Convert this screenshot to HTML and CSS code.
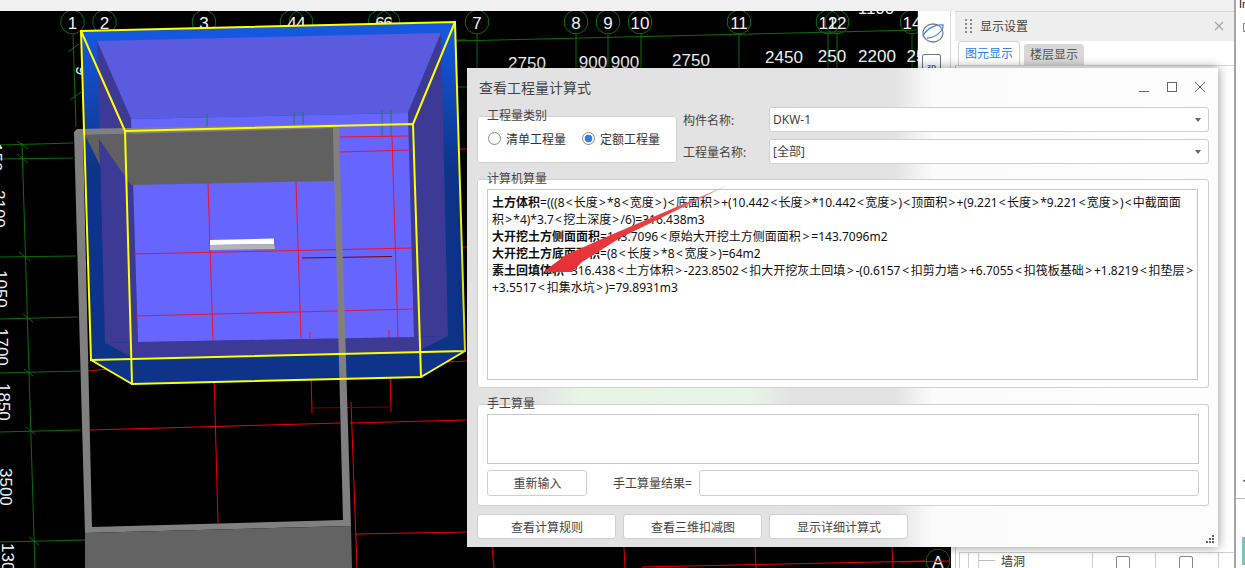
FILE: index.html
```html
<!DOCTYPE html>
<html lang="zh">
<head>
<meta charset="utf-8">
<title>查看工程量计算式</title>
<link rel="stylesheet" href="styles.css">
</head>
<body>
<div class="app">
  <div class="main-col">
    <div class="topbar"></div>
    <div class="work">
      <div class="canvas">
        <svg class="cad" viewBox="0 11 951 557" width="951" height="557">
          <defs>
            <polygon id="oct" points="11.6,3.1 8.5,8.5 3.1,11.6 -3.1,11.6 -8.5,8.5 -11.6,3.1 -11.6,-3.1 -8.5,-8.5 -3.1,-11.6 3.1,-11.6 8.5,-8.5 11.6,-3.1"/>
            <linearGradient id="pitfill" gradientUnits="userSpaceOnUse" x1="0" y1="30" x2="0" y2="170">
              <stop offset="0" stop-color="#1558e0"/>
              <stop offset="1" stop-color="#0d3489"/>
            </linearGradient>
          </defs>
          <!-- axes -->
          <g class="grn">
            <path d="M456 41L918 30M477 34V68M576 34V68M608 34V68M641 34V68M739 34V68M828 34V68M837 34V68M912 34V68M918 12V68"/>
            <path d="M73 34L76 127M68 52L79 44M70 100L81 92M0 145L73 143M0 159L73 158M0 257L76 256M0 319L78 317M0 373L80 371M0 432L81 430M0 542L85 540M22 143L35 568"/>
            <path d="M17 141L28 149M17 154L28 163M19 252L30 261M23 314L33 322M24 369L33 376M26 427L35 434M29 537L39 545"/>
            <path d="M457 40H467M458 87H467"/>
            <use href="#oct" x="72.5" y="22"/><use href="#oct" x="104.5" y="22"/><use href="#oct" x="204" y="22"/>
            <use href="#oct" x="292" y="22"/><use href="#oct" x="301" y="22"/><use href="#oct" x="380" y="22"/><use href="#oct" x="388" y="22"/>
            <use href="#oct" x="477" y="22"/><use href="#oct" x="576" y="22"/><use href="#oct" x="608" y="22"/><use href="#oct" x="640" y="22"/>
            <use href="#oct" x="739" y="22"/><use href="#oct" x="828" y="22"/><use href="#oct" x="837" y="22"/><use href="#oct" x="912" y="22"/>
            <use href="#oct" x="938" y="561"/>
          </g>
          <g class="lbl mid">
            <text x="72.5" y="29">1</text><text x="104.5" y="29">2</text><text x="204" y="29">3</text>
            <text x="292" y="29">4</text><text x="301" y="29">4</text><text x="380" y="29">6</text><text x="388" y="29">6</text>
            <text x="477" y="29">7</text><text x="576" y="29">8</text><text x="608" y="29">9</text><text x="640" y="29">10</text>
            <text x="739" y="29">11</text><text x="828" y="29">12</text><text x="837" y="29">12</text><text x="912" y="29">14</text>
            <text x="938" y="568">A</text>
            <text x="876" y="14">1100</text>
            <text x="527" y="69">2750</text><text x="593" y="68">900</text><text x="625" y="68">900</text>
            <text x="691" y="66">2750</text><text x="784" y="63">2450</text><text x="832" y="62">250</text><text x="877" y="62">2200</text><text x="916" y="62">25</text>
          </g>
          <g class="lbl">
            <text transform="rotate(90 76 66)" x="76" y="66">9</text>
            <text transform="rotate(90 -10 143)" x="-10" y="143">150</text>
            <text transform="rotate(90 -7 190)" x="-7" y="190">2100</text>
            <text transform="rotate(90 -5 270)" x="-5" y="270">1050</text>
            <text transform="rotate(90 -4 328)" x="-4" y="328">1700</text>
            <text transform="rotate(90 -2 383)" x="-2" y="383">1850</text>
            <text transform="rotate(90 0 468)" x="0" y="468">3500</text>
            <text transform="rotate(90 2 543)" x="2" y="543">130</text>
          </g>
          <!-- reds outside the pit -->
          <g class="red">
            <path d="M214 374L218 523M90 430L340 423M350 423L467 420M88 371L107 369M447 362L467 361M311 372L312 413M390 370L391 412M351 402L357 568M355 534L467 532M460 149H467M463 247H467"/>
            <path class="dk" d="M312 408L391 407"/>
            <path d="M492 547L494 568M624 547L625 568M755 547L756 568M892 547L893 568M642 567L925 561M900 562L950 561"/>
          </g>
          <!-- pit -->
          <polygon class="pit" points="81,31 455,22 465,351 421,377 132,384 91,360"/>
          <polygon class="pit-top" points="81,31 455,22 441,33 97,41"/>
          <polygon class="pit-back" points="97,41 441,33 408,113 131,119"/>
          <polygon class="pit-wall" points="97,41 131,119 138,342 105,343"/>
          <polygon class="pit-wall" points="441,33 408,113 414,337 448,336"/>
          <polygon class="pit-wall" points="105,343 138,342 414,337 448,336 418,351 133,358"/>
          <polygon class="pit-floor" points="131,119 408,113 414,337 138,342"/>
          <g class="red thin">
            <path d="M208 183L213 341M296 182L301 338M392 137L398 337M133 254L413 248M136 316L414 309M340 137L409 136M340 152L411 150M310 332V338M389 330V337"/>
            <path class="dk" d="M302 258L392 256.5"/>
          </g>
          <path class="grn2" d="M207 114V126M294 112V125M303 112V125M382 110V136M391 110V136"/>
          <polygon class="bar-w" points="210,240 274,238.5 274,244 210,245"/>
          <polygon class="bar-g" points="210,245 274,244 275,249 210,250"/>
          <!-- concrete frame -->
          <polygon class="slab" points="85,135 333,128 334,181 131,185 99,139 100,165"/>
          <polygon class="fr" points="74,132 77,129 335,124 339,128 351,526 343,520 333,128 83,135 92,527 343,520 351,526 85,533"/>
          <polygon class="fr-dk" points="85,533 351,526 352,568 85,568"/>
          <!-- yellow wire box -->
          <g class="ylw">
            <polygon points="81,31 455,22 465,351 91,360"/>
            <polygon points="125,131 413,124 421,377 132,384"/>
            <path d="M81 31L125 131M455 22L413 124M91 360L132 384M465 351L421 377"/>
          </g>
        </svg>
        <div class="strip">
          <svg width="24" height="22" viewBox="0 0 24 22" class="orbit">
            <ellipse cx="12" cy="11" rx="10" ry="9" class="orb-g"/>
            <path d="M2 14C6 6 15 2 22 3C23 8 15 16 6 16" class="orb-b"/>
          </svg>
          <div class="btn3d">3D</div>
        </div>
      </div>
      <div class="panel">
        <div class="p-head">
          <span class="grip"><i></i><i></i><i></i><i></i><i></i><i></i><i></i><i></i></span>
          <span class="p-title">显示设置</span>
          <svg class="p-close" width="10" height="10" viewBox="0 0 10 10"><path d="M1 1L9 9M9 1L1 9"/></svg>
        </div>
        <div class="p-tabs">
          <span class="tab on">图元显示</span>
          <span class="tab">楼层显示</span>
        </div>
        <div class="p-body">
          <div class="p-row">
            <span class="c1"></span><span class="c2"></span><span class="c3"><i class="dash"></i>墙洞</span>
            <span class="c4"><i class="box"></i></span><span class="c4"><i class="box"></i></span>
          </div>
        </div>
      </div>
    </div>
  </div>
  <div class="side">
    <span class="side-t">Ir</span>
    <i class="side-box"></i>
    <span class="side-arrow">◄</span>
    <i class="side-line"></i>
    <i class="side-teal"></i>
  </div>
</div>

<section class="dialog">
  <header class="d-title">
    <h1>查看工程量计算式</h1>
    <span class="wbtns">
      <svg width="12" height="12" viewBox="0 0 12 12"><path d="M1 10.5H11"/></svg>
      <svg width="12" height="12" viewBox="0 0 12 12"><rect x="1.5" y="1.5" width="9" height="9"/></svg>
      <svg width="12" height="12" viewBox="0 0 12 12"><path d="M1 1L11 11M11 1L1 11"/></svg>
    </span>
  </header>
  <div class="d-top">
    <fieldset class="grp g-type">
      <span class="legend">工程量类别</span>
      <label class="radio"><i></i>清单工程量</label>
      <label class="radio on"><i></i>定额工程量</label>
    </fieldset>
    <div class="d-fields">
      <div class="fld"><span class="f-name">构件名称:</span><div class="sel">DKW-1<b></b></div></div>
      <div class="fld"><span class="f-name">工程量名称:</span><div class="sel">[全部]<b></b></div></div>
    </div>
  </div>
  <fieldset class="grp g-calc">
    <span class="legend">计算机算量</span>
    <div class="area">
      <p class="l1"><b>土方体积</b>=(((8<u>&lt;</u>长度<u>&gt;</u>*8<u>&lt;</u>宽度<u>&gt;</u>)<u>&lt;</u>底面积<u>&gt;</u>+(10.442<u>&lt;</u>长度<u>&gt;</u>*10.442<u>&lt;</u>宽度<u>&gt;</u>)<u>&lt;</u>顶面积<u>&gt;</u>+(9.221<u>&lt;</u>长度<u>&gt;</u>*9.221<u>&lt;</u>宽度<u>&gt;</u>)<u>&lt;</u>中截面面<br>积<u>&gt;</u>*4)*3.7<u>&lt;</u>挖土深度<u>&gt;</u>/6)=316.438m3</p>
      <p class="l2"><b>大开挖土方侧面面积</b>=143.7096<u>&lt;</u>原始大开挖土方侧面面积<u>&gt;</u>=143.7096m2</p>
      <p class="l3"><b>大开挖土方底面面积</b>=(8<u>&lt;</u>长度<u>&gt;</u>*8<u>&lt;</u>宽度<u>&gt;</u>)=64m2</p>
      <p class="l4"><b>素土回填体积</b>=316.438<u>&lt;</u>土方体积<u>&gt;</u>-223.8502<u>&lt;</u>扣大开挖灰土回填<u>&gt;</u>-(0.6157<u>&lt;</u>扣剪力墙<u>&gt;</u>+6.7055<u>&lt;</u>扣筏板基础<u>&gt;</u>+1.8219<u>&lt;</u>扣垫层<u>&gt;</u><br>+3.5517<u>&lt;</u>扣集水坑<u>&gt;</u>)=79.8931m3</p>
    </div>
  </fieldset>
  <fieldset class="grp g-hand">
    <span class="legend">手工算量</span>
    <div class="area-s"></div>
    <div class="hand-row">
      <button class="btn b-re" type="button">重新输入</button>
      <span class="h-lab">手工算量结果=</span>
      <div class="inp"></div>
    </div>
  </fieldset>
  <div class="d-btns">
    <button class="btn b-wide" type="button">查看计算规则</button>
    <button class="btn b-wide" type="button">查看三维扣减图</button>
    <button class="btn b-wide" type="button">显示详细计算式</button>
  </div>
  <svg class="resize" width="9" height="9" viewBox="0 0 9 9"><path d="M6 0h2v2H6zM3 3h2v2H3zM6 3h2v2H6zM0 6h2v2H0zM3 6h2v2H3zM6 6h2v2H6z"/></svg>
  <svg class="arrow" width="200" height="100" viewBox="0 0 200 100">
    <defs>
      <linearGradient id="arr" x1="1" y1="0" x2="0" y2="1">
        <stop offset="0" stop-color="#f6b0b2"/>
        <stop offset=".3" stop-color="#ec4046"/>
        <stop offset="1" stop-color="#e62f36"/>
      </linearGradient>
    </defs>
    <polygon fill="url(#arr)" points="188,1 66,53 26,71 3,88 32,88 42,78 80,54"/>
  </svg>
</section>
</body>
</html>
```
FILE: styles.css
```css
* { box-sizing: border-box; }
html, body { margin: 0; padding: 0; }
body {
  width: 1245px; height: 568px; overflow: hidden; position: relative; background: #fff;
  font-family: "Noto Sans", "Noto Sans CJK SC", sans-serif; font-size: 12px; color: #333;
}
.app { display: flex; width: 1245px; height: 568px; }
.main-col { width: 1236px; display: flex; flex-direction: column; border-right: 2px solid #a6a6a6; flex: none; }
.topbar { height: 11px; background: #f0f0f0; flex: none; }
.work { display: flex; flex: 1; min-height: 0; }
.canvas { width: 951px; height: 557px; position: relative; background: #000; flex: none; overflow: hidden; }
.cad { display: block; }
.grn path, .grn use { fill: none; stroke: #0a6e0a; stroke-width: 1; }
.grn2 { fill: none; stroke: #0f8a1f; stroke-width: 1; }
.lbl text { fill: #f2f2f2; font-family: "Liberation Sans", sans-serif; font-size: 17px; }
.mid text { text-anchor: middle; }
.red path { fill: none; stroke: #f00000; stroke-width: 1; }
.red path.dk { stroke: #7a0000; }
.thin path { stroke: #f01030; }
.pit { fill: url(#pitfill); }
.pit-top { fill: #1558e0; }
.pit-back { fill: #5b5be0; }
.pit-wall { fill: #3c3a94; }
.pit-floor { fill: #6666ff; }
.bar-w { fill: #fff; }
.bar-g { fill: #b4b4b4; }
.slab { fill: #606060; }
.fr { fill: #808080; fill-rule: evenodd; }
.fr-dk { fill: #636363; }
.ylw polygon, .ylw path { fill: none; stroke: #ffff00; stroke-width: 2; }
.strip {
  position: absolute; top: 0; right: 0; width: 33px; height: 70px; background: #fff;
  border-right: 1px solid #d8d8d8; padding: 11px 0 0 3px;
}
.orbit { display: block; }
.orb-g { fill: none; stroke: #7a8088; stroke-width: 1.3; }
.orb-b { fill: none; stroke: #3d8be8; stroke-width: 1.3; }
.btn3d {
  width: 19px; height: 20px; margin: 10px 0 0 1px; border: 1px solid #6e7480; border-radius: 2px;
  color: #2e6fd0; font-size: 7px; font-weight: 700; text-align: center; line-height: 26px;
}
.panel { flex: 1; display: flex; flex-direction: column; padding-left: 4px; min-width: 0; }
.p-head {
  height: 30px; background: #eeeeef; border-top: 1px solid #d4d4d4; display: flex; align-items: center;
  padding: 0 0 2px 10px; flex: none;
}
.grip { display: grid; grid-template-columns: 2px 2px; gap: 2px 3px; width: 7px; }
.grip i { width: 2px; height: 2px; background: #8a8a8a; }
.p-title { margin-left: 8px; font-size: 12px; color: #444; }
.p-close { margin-left: auto; margin-right: 10px; }
.p-close path { stroke: #a4a4a4; stroke-width: 1.2; fill: none; }
.p-tabs { height: 25px; display: flex; gap: 4px; padding: 2px 0 0 3px; align-items: flex-end; flex: none; border-bottom: 1px solid #d4d4d4; }
.tab {
  width: 60px; height: 21px; background: #d8d8d8; border-radius: 3px 3px 0 0; text-align: center;
  line-height: 22px; font-size: 12px; color: #555;
}
.tab.on {
  width: 62px; height: 24px; background: #fff; border: 1px solid #d4d4d4; border-bottom: 0;
  color: #2e80e8; line-height: 24px;
}
.p-body { flex: 1; display: flex; flex-direction: column; justify-content: flex-end; border-left: 1px solid #cfcfcf; }
.p-row { height: 16px; display: flex; border-top: 1px solid #cfcfcf; margin-left: 3px; }
.c1 { width: 9px; border-left: 1px solid #cfcfcf; }
.c2 { width: 10px; border-left: 1px solid #cfcfcf; }
.c3 { width: 115px; border-left: 1px solid #cfcfcf; border-right: 1px solid #cfcfcf; display: flex; align-items: center; font-size: 12px; color: #333; }
.dash { width: 16px; height: 1px; background: #bdbdbd; margin-right: 6px; flex: none; }
.c4 { width: 63px; border-right: 1px solid #cfcfcf; padding: 3px 0 0 23px; }
.box { display: block; width: 14px; height: 20px; border: 1px solid #888; border-radius: 2px; }
.side { width: 9px; display: flex; flex-direction: column; overflow: hidden; background: #fff; flex: none; }
.side-t { font-size: 11px; line-height: 8px; height: 8px; color: #111; font-family: "Liberation Sans", sans-serif; padding-left: 3px; white-space: nowrap; overflow: hidden; }
.side-box { display: block; width: 9px; height: 9px; margin: 15px 0 0 7px; border: 1px solid #888; flex: none; }
.side-arrow { display: block; margin-top: 443px; padding-left: 5px; font-size: 8px; line-height: 10px; height: 10px; color: #555; flex: none; overflow: hidden; }
.side-line { display: block; height: 1px; background: #bbb; margin-top: 13px; flex: none; }
.side-teal { display: block; height: 28px; margin: 38px 0 0 6px; background: #7cc4be; flex: none; }

.dialog {
  position: absolute; left: 467px; top: 68px; width: 751px; height: 479px;
  background-color: #e2e2e2;
  background-image:
    linear-gradient(90deg, transparent 9%, #e6f5e6 15%, #e8f4e8 38%, transparent 43%),
    linear-gradient(90deg, #e2e2e2 0, #e3e3e3 57%, #fbfbfb 62%, #fdfdfd 100%);
  background-size: 100% 25px, 100% 100%;
  background-position: 0 319px, 0 0;
  background-repeat: no-repeat;
  box-shadow: 0 0 10px rgba(0,0,0,.45); padding: 0 9px 0 10px; display: flex; flex-direction: column;
}
.d-title { height: 39px; display: flex; align-items: center; flex: none; }
.d-title h1 { margin: -1px 0 0 2px; font-size: 14px; font-weight: 400; color: #444; }
.wbtns { margin-left: auto; display: flex; gap: 16px; margin-right: 3px; margin-top: -2px; }
.wbtns path, .wbtns rect { fill: none; stroke: #666; stroke-width: 1; }
.d-top { display: flex; flex: none; height: 72px; }
.grp { position: relative; margin: 0; padding: 0; border: 1px solid #cfcfcf; border-radius: 3px; background: #fff; }
.legend { position: absolute; left: 9px; top: -9px; line-height: 16px; color: #444; }
.g-type { width: 200px; height: 47px; margin-top: 9px; display: flex; align-items: center; padding: 0 0 2px 10px; gap: 16px; flex: none; }
.radio { display: flex; align-items: center; gap: 5px; color: #333; }
.radio i { width: 13px; height: 13px; border: 1px solid #8a8a8a; border-radius: 50%; background: #fff; display: block; }
.radio.on i { border-color: #8a8a8a; background: radial-gradient(circle, #2e80e8 0, #2e80e8 3.5px, #fff 4.2px); }
.d-fields { flex: 1; display: flex; flex-direction: column; gap: 7px; padding-left: 6px; }
.fld { display: flex; align-items: center; height: 25px; }
.f-name { width: 86px; color: #444; flex: none; }
.sel {
  flex: 1; height: 25px; border: 1px solid #cfcfcf; border-radius: 3px; background: #fff;
  padding-left: 3px; line-height: 23px; color: #444; position: relative; font-size: 12px;
}
.sel b { position: absolute; right: 7px; top: 10px; border: 3px solid transparent; border-top: 4px solid #666; border-bottom: 0; }
.g-calc { height: 209px; padding: 9px 10px 0 9px; flex: none; }
.area { height: 191px; border: 1px solid #c8c8c8; background: #fff; padding: 4px 0 0 4px; color: #111; line-height: 17px; white-space: nowrap; }
.area p { margin: 0; }
.area b { font-weight: 700; }
.area u { text-decoration: none; padding: 0 1.5px; }
.area .l1 u { padding: 0 1.2px; }
.area .l2 u { padding: 0 1.85px; }
.area .l4 u { padding: 0 1.7px; }
.g-hand { height: 102px; margin-top: 16px; padding: 9px 9px 0 9px; flex: none; }
.area-s { height: 50px; border: 1px solid #c8c8c8; background: #fff; }
.hand-row { display: flex; align-items: center; margin-top: 6px; height: 26px; }
.btn {
  font: inherit; color: #444; background: #fff; border: 1px solid #cfcfcf; border-radius: 3px; padding: 0 0 0 1px; cursor: default;
}
.b-re { width: 100px; height: 26px; flex: none; }
.h-lab { margin-left: 26px; width: 86px; flex: none; color: #444; }
.inp { flex: 1; height: 26px; border: 1px solid #cfcfcf; border-radius: 3px; background: #fff; }
.d-btns { display: flex; gap: 7px; margin-top: 8px; flex: none; }
.b-wide { width: 139px; height: 25px; }
.resize { position: absolute; right: 3px; bottom: 3px; }
.resize path { fill: #666; }
.arrow { position: absolute; left: 73px; top: 116px; pointer-events: none; }
```
